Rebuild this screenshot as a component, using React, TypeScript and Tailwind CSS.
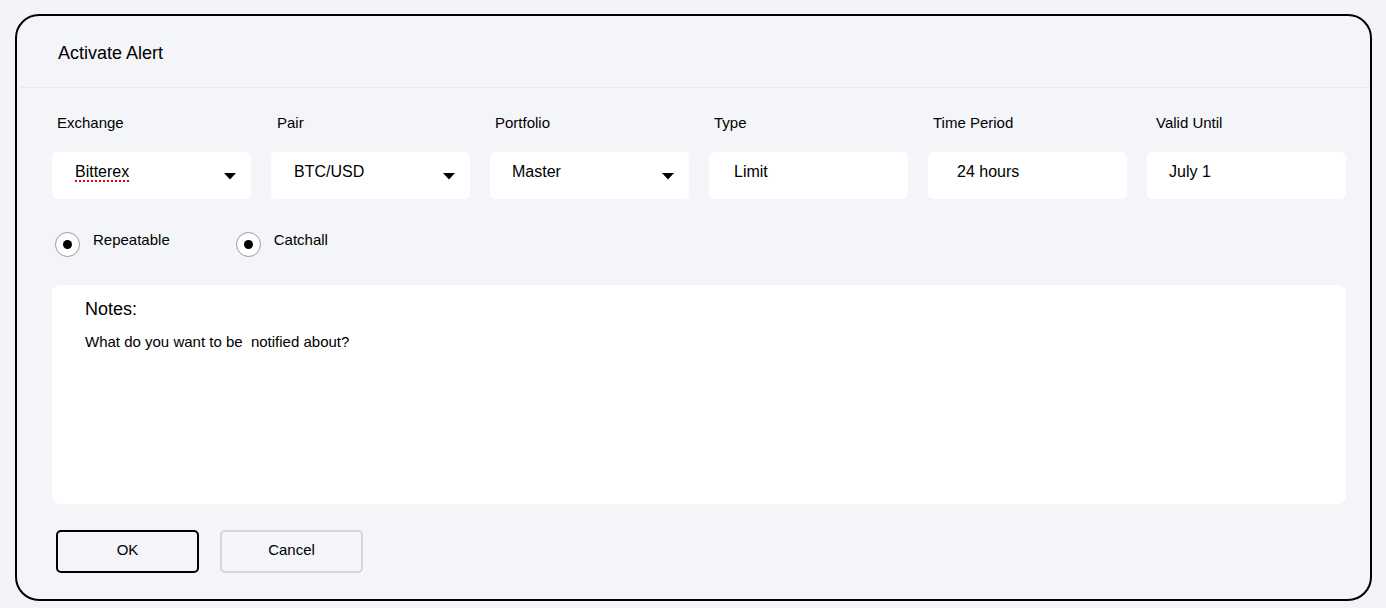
import React from "react";

const fields = [
  { label: "Exchange", value: "Bitterex", select: true, typo: true, valuePad: "pl-[23px]", labelPad: "pl-[5px]" },
  { label: "Pair", value: "BTC/USD", select: true, valuePad: "pl-[23px]", labelPad: "pl-[6px]" },
  { label: "Portfolio", value: "Master", select: true, valuePad: "pl-[22px]", labelPad: "pl-[5px]" },
  { label: "Type", value: "Limit", valuePad: "pl-[25px]", labelPad: "pl-[5px]" },
  { label: "Time Period", value: "24 hours", valuePad: "pl-[29px]", labelPad: "pl-[5px]" },
  { label: "Valid Until", value: "July 1", valuePad: "pl-[22px]", labelPad: "pl-[9px]" },
];

const Caret = () => (
  <svg width="12" height="7" viewBox="0 0 12 7" className="absolute right-[15px] top-[21px]">
    <path d="M0 0 L12 0 L6 6.5 Z" fill="#000" />
  </svg>
);

const Radio = ({ label }: { label: string }) => (
  <label className="flex items-start gap-[13px]">
    <span className="w-[25px] h-[25px] rounded-full border border-[#9a9a9a] bg-white flex items-center justify-center">
      <span className="w-[9px] h-[9px] rounded-full bg-black" />
    </span>
    <span className="text-[15px] leading-[17px] text-black -mt-[1px]">{label}</span>
  </label>
);

export default function App() {
  return (
    <div
      className="w-[1386px] h-[608px] bg-[#f3f4f8] pt-[14px] pl-[15px]"
      style={{ fontFamily: '"Liberation Sans", Arial, sans-serif' }}
    >
      <div className="w-[1357px] h-[587px] border-2 border-black rounded-[24px] bg-[#f4f5f9] flex flex-col">
        <div className="h-[72px] flex items-center pl-[38px] pt-[4px] border-b border-[#e9eaef] ml-[3px]">
          <h1 className="text-[18px] text-black">Activate Alert</h1>
        </div>

        <div className="pl-[35px] pr-[24px] pt-[25px]">
          <div className="grid grid-cols-6 gap-x-[20px]">
            {fields.map((f) => (
              <div key={f.label} className="flex flex-col">
                <span className={`text-[15px] leading-[20px] text-black ${f.labelPad}`}>{f.label}</span>
                <div className={`relative mt-[19px] h-[47px] bg-white rounded-[5px] pt-[8px] ${f.valuePad}`}>
                  <span
                    className={`text-[16px] leading-[20px] text-black ${
                      f.typo ? "underline decoration-dotted decoration-red-600 decoration-2 underline-offset-[3px]" : ""
                    }`}
                  >
                    {f.value}
                  </span>
                  {f.select && <Caret />}
                </div>
              </div>
            ))}
          </div>

          <div className="flex mt-[33px] pl-[3px] gap-[66px]">
            <Radio label="Repeatable" />
            <Radio label="Catchall" />
          </div>

          <div className="mt-[28px] h-[219px] bg-white rounded-[8px] pl-[33px] pt-[13px]">
            <p className="text-[18px] leading-[22px] text-black">Notes:</p>
            <p className="mt-[12px] text-[15px] leading-[20px] text-black whitespace-pre">
              {"What do you want to be  notified about?"}
            </p>
          </div>

          <div className="flex gap-[21px] mt-[26px] pl-[4px]">
            <button className="w-[143px] h-[43px] border-2 border-black rounded-[5px] text-[15px] text-black pb-[2px]">
              OK
            </button>
            <button className="w-[143px] h-[43px] border-2 border-[#d6d6d6] rounded-[5px] text-[15px] text-black pb-[2px]">
              Cancel
            </button>
          </div>
        </div>
      </div>
    </div>
  );
}
